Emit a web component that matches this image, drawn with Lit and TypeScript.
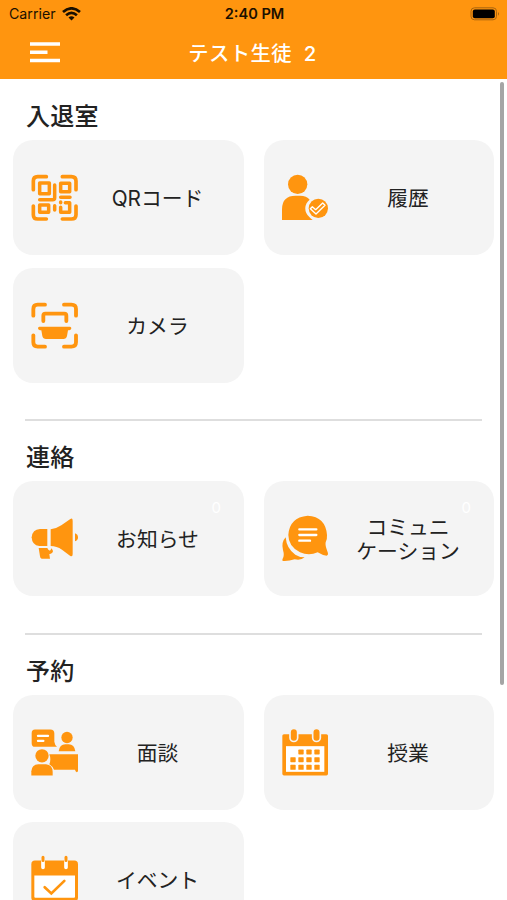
import { LitElement, html, css, svg } from "lit";
import { customElement } from "lit/decorators.js";

interface Tile {
  lines: string[];
  viewBox: string;
  icon: unknown;
  badge?: string;
}

interface Section {
  title: string;
  tiles: Tile[];
}

const qrIcon = svg`
  <g fill="none" stroke="#ff950f" stroke-width="11" stroke-linecap="round" stroke-linejoin="round">
    <path d="M40 74V48Q40 35 53 35H79M127 35H154Q168 35 168 48V74M40 123V149Q40 162 53 162H79M127 162H154Q168 162 168 149V123"/>
  </g>
  <g fill="none" stroke="#ff950f" stroke-width="10.5" stroke-linejoin="round">
    <path d="M59 54H88V86H59ZM122 55H149V80H122ZM59 120H86V142H59Z"/>
    <path stroke-linecap="round" d="M104 60V98Q104 104 98 104H59M104 122V135M122 97H150M136 113H149V142H122V127M122 111V113"/>
  </g>`;

const historyIcon = svg`
  <g fill="#ff950f">
    <circle cx="83" cy="58" r="29"/>
    <path d="M36 165V133Q36 92 77 92H90Q110 92 119 104A33 33 0 0 0 118 156Q122 161 128 165Z"/>
    <circle cx="145" cy="130" r="29"/>
  </g>
  <path d="M121 131L127 125L137 134L158 114L165 121L138 147Z" fill="none" stroke="#fff" stroke-width="4" stroke-linejoin="round"/>`;

const cameraIcon = svg`
  <g fill="none" stroke="#ff950f" stroke-width="11.5" stroke-linecap="round" stroke-linejoin="round">
    <path d="M40 77V57Q40 44 53 44H75M132 44H154Q168 44 168 57V77M40 136V157Q40 170 53 170H75M132 170H154Q168 170 168 157V136"/>
    <path d="M70 93V77Q70 71 76 71H133Q139 71 139 77V93"/>
  </g>
  <path fill="#ff950f" d="M58 110H150Q154 110 154 115Q154 120 148 121H144L141 138Q139 147 130 147H78Q69 147 67 138L64 121H60Q54 120 54 115Q54 110 58 110Z"/>`;

const megaphoneIcon = svg`
  <g fill="#ff950f">
    <path d="M82 72V123H58Q36 121 35 97Q37 73 60 72Z"/>
    <path d="M92 73Q111 70 124 61L151 42Q158 38 158 47V147Q158 157 150 152L126 134Q110 123 92 123Z"/>
    <path d="M165 85Q174 88 174 97Q174 106 165 109Z"/>
    <path d="M56 129H82Q84 136 90 137L95 130L99 138Q98 146 88 147L90 161H65Q60 160 60 154Z"/>
  </g>`;

const chatIcon = svg`
  <path fill="#ff950f" d="M47 97Q50 132 76 149Q88 157 104 157Q93 167 74 163Q56 169 39 168Q35 167 38 161Q44 152 39 135Q33 112 47 97Z"/>
  <path fill="#ff950f" d="M113 32Q167 35 171 90Q172 101 167 112Q165 121 172 139Q177 150 170 152Q157 151 143 142Q117 154 90 142Q55 124 55 90Q58 37 113 32Z"/>
  <path fill="none" stroke="#fff" stroke-width="7" stroke-linecap="round" d="M88 73H139M88 90H139M88 107H120"/>`;

const meetingIcon = svg`
  <g fill="#ff950f">
    <path d="M45 33H91Q103 33 103 45V70Q104 79 111 85H45Q35 85 35 74V44Q35 33 45 33Z"/>
    <circle cx="141" cy="57" r="17"/>
    <path d="M116 98Q119 77 136 77H146Q163 77 166 98Z"/>
    <path d="M88 107H174V157Q174 161 170 161Q166 160 165 154H102Q98 143 88 137Q94 122 88 107Z"/>
    <circle cx="66" cy="112" r="20"/>
    <path d="M34 171V158Q35 138 55 137H78Q98 139 98 160V171Z"/>
  </g>
  <path fill="none" stroke="#fff" stroke-width="7" stroke-linecap="round" d="M54 52H84M54 67H70"/>`;

const dayCells = [
  [85, 93], [109, 93], [133, 93],
  [61, 116], [85, 116], [109, 116], [133, 116],
  [61, 139], [85, 139], [109, 139], [133, 139],
];

const calendarIcon = svg`
  <rect x="37" y="47" width="137" height="124" rx="5" fill="#ff950f"/>
  <rect x="48" y="83" width="115" height="77" fill="#fff"/>
  <rect x="60" y="30" width="23" height="39" rx="11.5" fill="#ff950f" stroke="#f4f4f4" stroke-width="5"/>
  <rect x="128" y="30" width="23" height="39" rx="11.5" fill="#ff950f" stroke="#f4f4f4" stroke-width="5"/>
  ${dayCells.map(([x, y]) => svg`<rect x=${x} y=${y} width="16" height="15" rx="2" fill="#ff950f"/>`)}`;

const eventIcon = svg`
  <rect x="94" y="138" width="140" height="122" rx="11" fill="#ff950f"/>
  <path d="M103 183H225V247Q225 250 222 250H106Q103 250 103 247Z" fill="#fff"/>
  <path d="M129 137V159M198 137V159" stroke="#fff" stroke-width="11" stroke-linecap="round"/>
  <path d="M129 128V138M198 128V138" stroke="#ff950f" stroke-width="9" stroke-linecap="round"/>
  <path d="M134 218L154 237L193 199" fill="none" stroke="#ff950f" stroke-width="8" stroke-linecap="round"/>`;

const sections: Section[] = [
  {
    title: "入退室",
    tiles: [
      { lines: ["QRコード"], viewBox: "30 24 150 147", icon: qrIcon },
      { lines: ["履歴"], viewBox: "33 24 150 147", icon: historyIcon },
      { lines: ["カメラ"], viewBox: "30 33 150 147", icon: cameraIcon },
    ],
  },
  {
    title: "連絡",
    tiles: [
      { lines: ["お知らせ"], viewBox: "30 27 150 147", icon: megaphoneIcon, badge: "0" },
      { lines: ["コミュニ", "ケーション"], viewBox: "33 27 150 147", icon: chatIcon, badge: "0" },
    ],
  },
  {
    title: "予約",
    tiles: [
      { lines: ["面談"], viewBox: "30 28.5 150 147", icon: meetingIcon },
      { lines: ["授業"], viewBox: "33 28.5 150 147", icon: calendarIcon },
      { lines: ["イベント"], viewBox: "90 121.5 150 147", icon: eventIcon },
    ],
  },
];

@customElement("menu-tile")
class MenuTile extends LitElement {
  static properties = { tile: { attribute: false } };
  declare tile: Tile;

  static styles = css`
    :host {
      position: relative;
      box-sizing: border-box;
      display: flex;
      align-items: center;
      height: 115px;
      padding: 0 9px 0 17px;
      border-radius: 20px;
      background: #f4f4f4;
    }
    .icon {
      flex: none;
      width: 50px;
      height: 49px;
    }
    .label {
      flex: 1;
      display: flex;
      flex-direction: column;
      align-items: center;
      padding-top: 3px;
      font-size: 20.8px;
      line-height: 24px;
      color: #222;
      white-space: nowrap;
    }
    .badge {
      position: absolute;
      top: 18px;
      right: 23px;
      font-size: 15px;
      line-height: 18px;
      color: #fff;
    }
  `;

  render() {
    const { lines, viewBox, icon, badge } = this.tile;
    return html`
      <svg class="icon" viewBox=${viewBox}>${icon}</svg>
      <div class="label">${lines.map((l) => html`<span>${l}</span>`)}</div>
      ${badge ? html`<span class="badge">${badge}</span>` : ""}
    `;
  }
}

@customElement("app-root")
class AppRoot extends LitElement {
  static styles = css`
    :host {
      display: flex;
      flex-direction: column;
      height: 900px;
      overflow: hidden;
      background: #fff;
      font-family: Inter, "Noto Sans CJK JP", sans-serif;
    }
    .header {
      flex: none;
      height: 79px;
      background: #ff950f;
    }
    .status {
      display: grid;
      grid-template-columns: 1fr auto 1fr;
      align-items: center;
      height: 27px;
      padding: 0 7px 0 9px;
      color: #1a1000;
    }
    .carrier {
      display: flex;
      align-items: center;
      gap: 6px;
      font-size: 14.2px;
    }
    .time {
      font-weight: 600;
      font-size: 14.6px;
    }
    .battery {
      justify-self: end;
    }
    .nav {
      display: grid;
      grid-template-columns: 60px 1fr 60px;
      align-items: center;
      height: 50px;
      color: #fff;
    }
    .menu {
      margin-left: 30px;
    }
    .title {
      margin-right: 2px;
      text-align: center;
      font-size: 20.3px;
      font-weight: 500;
      letter-spacing: 0.5px;
      white-space: pre;
    }
    .body {
      flex: 1;
      min-height: 0;
      display: flex;
      justify-content: space-between;
      overflow: hidden;
    }
    .list {
      width: 481px;
      padding-left: 13px;
    }
    .section + .section::before {
      content: "";
      display: block;
      height: 2px;
      margin: 36.7px 12px 0 12px;
      background: #dedede;
    }
    .heading {
      box-sizing: border-box;
      margin: 0;
      height: 61px;
      padding: 19.5px 0 0 13px;
      font-size: 24px;
      line-height: 36px;
      font-weight: 500;
      letter-spacing: 0.3px;
      color: #222;
    }
    .section + .section .heading {
      height: 59.9px;
      padding-top: 18.8px;
    }
    .tiles {
      display: grid;
      grid-template-columns: 231px 230px;
      gap: 12.5px 20px;
    }
    .scrollbar {
      width: 4px;
      height: 603px;
      margin: 3px 3px 0 0;
      border-radius: 2px;
      background: #a5a5a5;
    }
  `;

  render() {
    return html`
      <header class="header">
        <div class="status">
          <span class="carrier">
            Carrier
            <svg width="19" height="14" viewBox="0 0 19 14">
              <g fill="none" stroke="#1a1000" stroke-width="2.7">
                <path d="M1 5.1Q9.5 -2.4 18 5.1" />
                <path d="M4.1 8.3Q9.5 3.6 14.9 8.3" />
              </g>
              <path d="M6.5 10.5Q9.5 8 12.5 10.5L9.5 13.6Z" fill="#1a1000" />
            </svg>
          </span>
          <span class="time">2:40 PM</span>
          <svg class="battery" width="30" height="14" viewBox="0 0 30 14">
            <rect x="1" y="0.8" width="25.5" height="12" rx="3.5" fill="none" stroke="#a86510" />
            <rect x="2.8" y="2.5" width="22" height="8.8" rx="2" fill="#000" />
            <path d="M28 5Q30 6.8 28 8.8Z" fill="#a86510" />
          </svg>
        </div>
        <div class="nav">
          <svg class="menu" width="30" height="21" viewBox="0 0 30 21">
            <path d="M0 2H30M0 10.3H17.5M0 18.5H30" stroke="#fff" stroke-width="3.4" />
          </svg>
          <span class="title">テスト生徒  2</span>
        </div>
      </header>
      <main class="body">
        <div class="list">
          ${sections.map(
            (s) => html`
              <section class="section">
                <h2 class="heading">${s.title}</h2>
                <div class="tiles">
                  ${s.tiles.map((t) => html`<menu-tile .tile=${t}></menu-tile>`)}
                </div>
              </section>
            `,
          )}
        </div>
        <div class="scrollbar"></div>
      </main>
    `;
  }
}
